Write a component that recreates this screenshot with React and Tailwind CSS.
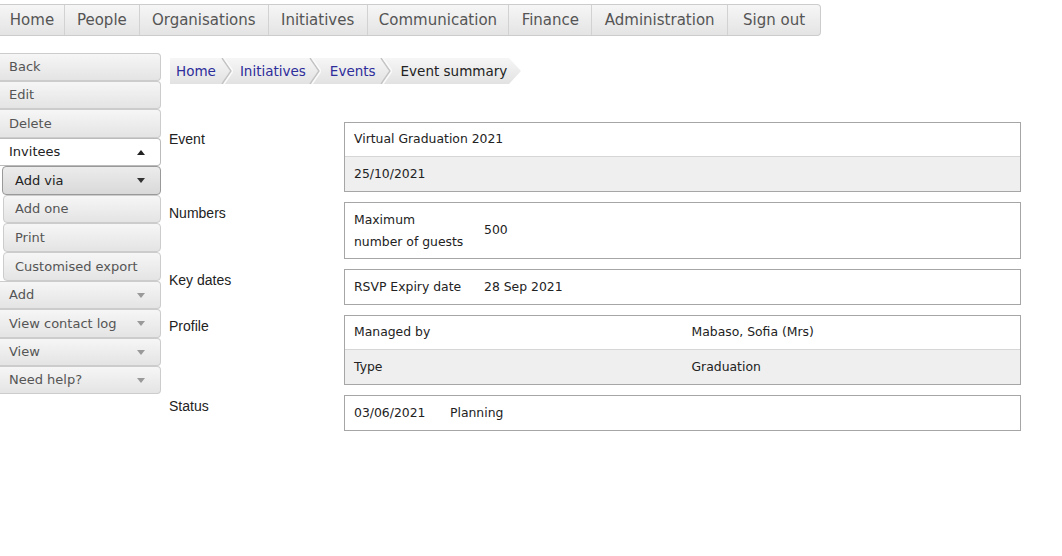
const nav = [
  ['Home', 'w-[65px]'],
  ['People', 'w-[75px]'],
  ['Organisations', 'w-[129px]'],
  ['Initiatives', 'w-[99px]'],
  ['Communication', 'w-[142px]'],
  ['Finance', 'w-[83px]'],
  ['Administration', 'w-[136px]'],
  ['Sign out', 'w-[92px]'],
];

const verdana = { fontFamily: '"DejaVu Sans", Verdana, sans-serif' };

function Down({ dark }) {
  return <span className={`h-0 w-0 border-x-4 border-t-[5px] border-x-transparent ${dark ? 'border-t-[#333]' : 'border-t-[#999]'}`} />;
}

function SideButton({ label, h, variant = 'plain', arrow }) {
  const base = 'flex items-center justify-between pr-[15px] text-[13px]';
  let cls;
  if (variant === 'open') cls = 'ml-0 border border-l-0 border-[#bbb] bg-white pl-[9px] text-[#222] rounded-r-[4px]';
  else if (variant === 'active') cls = 'ml-[2px] border border-[#999] bg-linear-to-b from-[#ececec] to-[#d9d9d9] pl-[12px] text-[#222] rounded-[4px]';
  else if (variant === 'sub') cls = 'ml-[3px] border border-[#ccc] bg-linear-to-b from-[#f6f6f6] to-[#e4e4e4] pl-[11px] text-[#555] rounded-[4px]';
  else cls = 'border border-l-0 border-[#ccc] bg-linear-to-b from-[#f6f6f6] to-[#e4e4e4] pl-[9px] text-[#555] rounded-r-[4px]';
  return (
    <div className={`${base} ${cls} ${h}`}>
      <span>{label}</span>
      {arrow === 'up' && <span className="h-0 w-0 border-x-4 border-b-[5px] border-x-transparent border-b-[#222]" />}
      {arrow === 'down-dark' && <Down dark />}
      {arrow === 'down' && <Down />}
    </div>
  );
}

function Chevron() {
  return (
    <svg width="12" height="26" viewBox="0 0 12 26" className="shrink-0">
      <path d="M1 0 L10 13 L1 26" fill="none" stroke="#c4c4c4" strokeWidth="1.5" />
      <path d="M3 0 L12 13 L3 26" fill="none" stroke="#fafafa" strokeWidth="1.5" />
    </svg>
  );
}

function Box({ children }) {
  return <div className="w-[677px] border border-[#a6a6a6] text-[12.4px] text-[#222]">{children}</div>;
}

function Row({ label, pt = 'pt-[3px]', children }) {
  return (
    <div className="mb-[10px] flex items-start">
      <div className={`w-[175px] text-[14px] leading-[16px] text-[#222] ${pt}`} style={{ fontFamily: '"Liberation Sans", Arial, sans-serif' }}>{label}</div>
      <Box>{children}</Box>
    </div>
  );
}

export default function App() {
  return (
    <div className="min-h-[556px] w-[1062px] bg-white" style={verdana}>
      <div className="pt-[4px]">
        <div className="flex h-[32px] w-[821px] rounded-r-[4px] border border-l-0 border-[#ccc] bg-linear-to-b from-[#f6f6f6] to-[#e4e4e4]">
          {nav.map(([t, w], i) => (
            <div key={t} className={`flex items-center justify-center text-[15px] text-[#555] ${w} ${i < nav.length - 1 ? 'border-r border-[#d2d2d2]' : ''}`}>{t}</div>
          ))}
        </div>
      </div>

      <div className="flex items-start">
        <div className="mt-[17px] flex w-[161px] flex-col">
          <SideButton label="Back" h="h-[28px]" />
          <SideButton label="Edit" h="h-[28px]" />
          <SideButton label="Delete" h="h-[29px]" />
          <SideButton label="Invitees" h="h-[28px]" variant="open" arrow="up" />
          <SideButton label="Add via" h="h-[29px]" variant="active" arrow="down-dark" />
          <SideButton label="Add one" h="h-[28px]" variant="sub" />
          <SideButton label="Print" h="h-[29px]" variant="sub" />
          <SideButton label="Customised export" h="h-[29px]" variant="sub" />
          <SideButton label="Add" h="h-[28px]" arrow="down" />
          <SideButton label="View contact log" h="h-[29px]" arrow="down" />
          <SideButton label="View" h="h-[28px]" arrow="down" />
          <SideButton label="Need help?" h="h-[28px]" arrow="down" />
        </div>

        <div className="ml-[8px] pt-[22px]">
          <div className="ml-[1px] flex h-[26px] w-[351px] items-center bg-linear-to-b from-[#f6f6f6] to-[#e2e2e2] text-[13.5px] [clip-path:polygon(0_0,calc(100%-12px)_0,100%_50%,calc(100%-12px)_100%,0_100%)]">
            <span className="pl-[6px] pr-[5px] text-[#2d2d9b]">Home</span>
            <Chevron />
            <span className="pl-[7px] pr-[3px] text-[#2d2d9b]">Initiatives</span>
            <Chevron />
            <span className="pl-[9px] pr-[4px] text-[#2d2d9b]">Events</span>
            <Chevron />
            <span className="pl-[9px] text-[#222]">Event summary</span>
          </div>

          <div className="mt-[38px]">
            <Row label="Event" pt="pt-[9px]">
              <div className="flex h-[34px] items-center border-b border-[#d6d6d6] px-[9px]">Virtual Graduation 2021</div>
              <div className="flex h-[34px] items-center bg-[#efefef] px-[9px]">25/10/2021</div>
            </Row>
            <Row label="Numbers">
              <div className="flex h-[55px] items-center">
                <div className="w-[130px] pl-[9px] leading-[22px]">Maximum<br />number of guests</div>
                <div className="pl-[9px]">500</div>
              </div>
            </Row>
            <Row label="Key dates">
              <div className="flex h-[34px] items-center">
                <div className="w-[130px] pl-[9px]">RSVP Expiry date</div>
                <div className="pl-[9px]">28 Sep 2021</div>
              </div>
            </Row>
            <Row label="Profile">
              <div className="grid h-[34px] grid-cols-2 items-center border-b border-[#d6d6d6]">
                <div className="pl-[9px]">Managed by</div>
                <div className="pl-[9px]">Mabaso, Sofia (Mrs)</div>
              </div>
              <div className="grid h-[34px] grid-cols-2 items-center bg-[#efefef]">
                <div className="pl-[9px]">Type</div>
                <div className="pl-[9px]">Graduation</div>
              </div>
            </Row>
            <Row label="Status">
              <div className="flex h-[34px] items-center">
                <div className="w-[105px] pl-[9px]">03/06/2021</div>
                <div>Planning</div>
              </div>
            </Row>
          </div>
        </div>
      </div>
    </div>
  );
}
